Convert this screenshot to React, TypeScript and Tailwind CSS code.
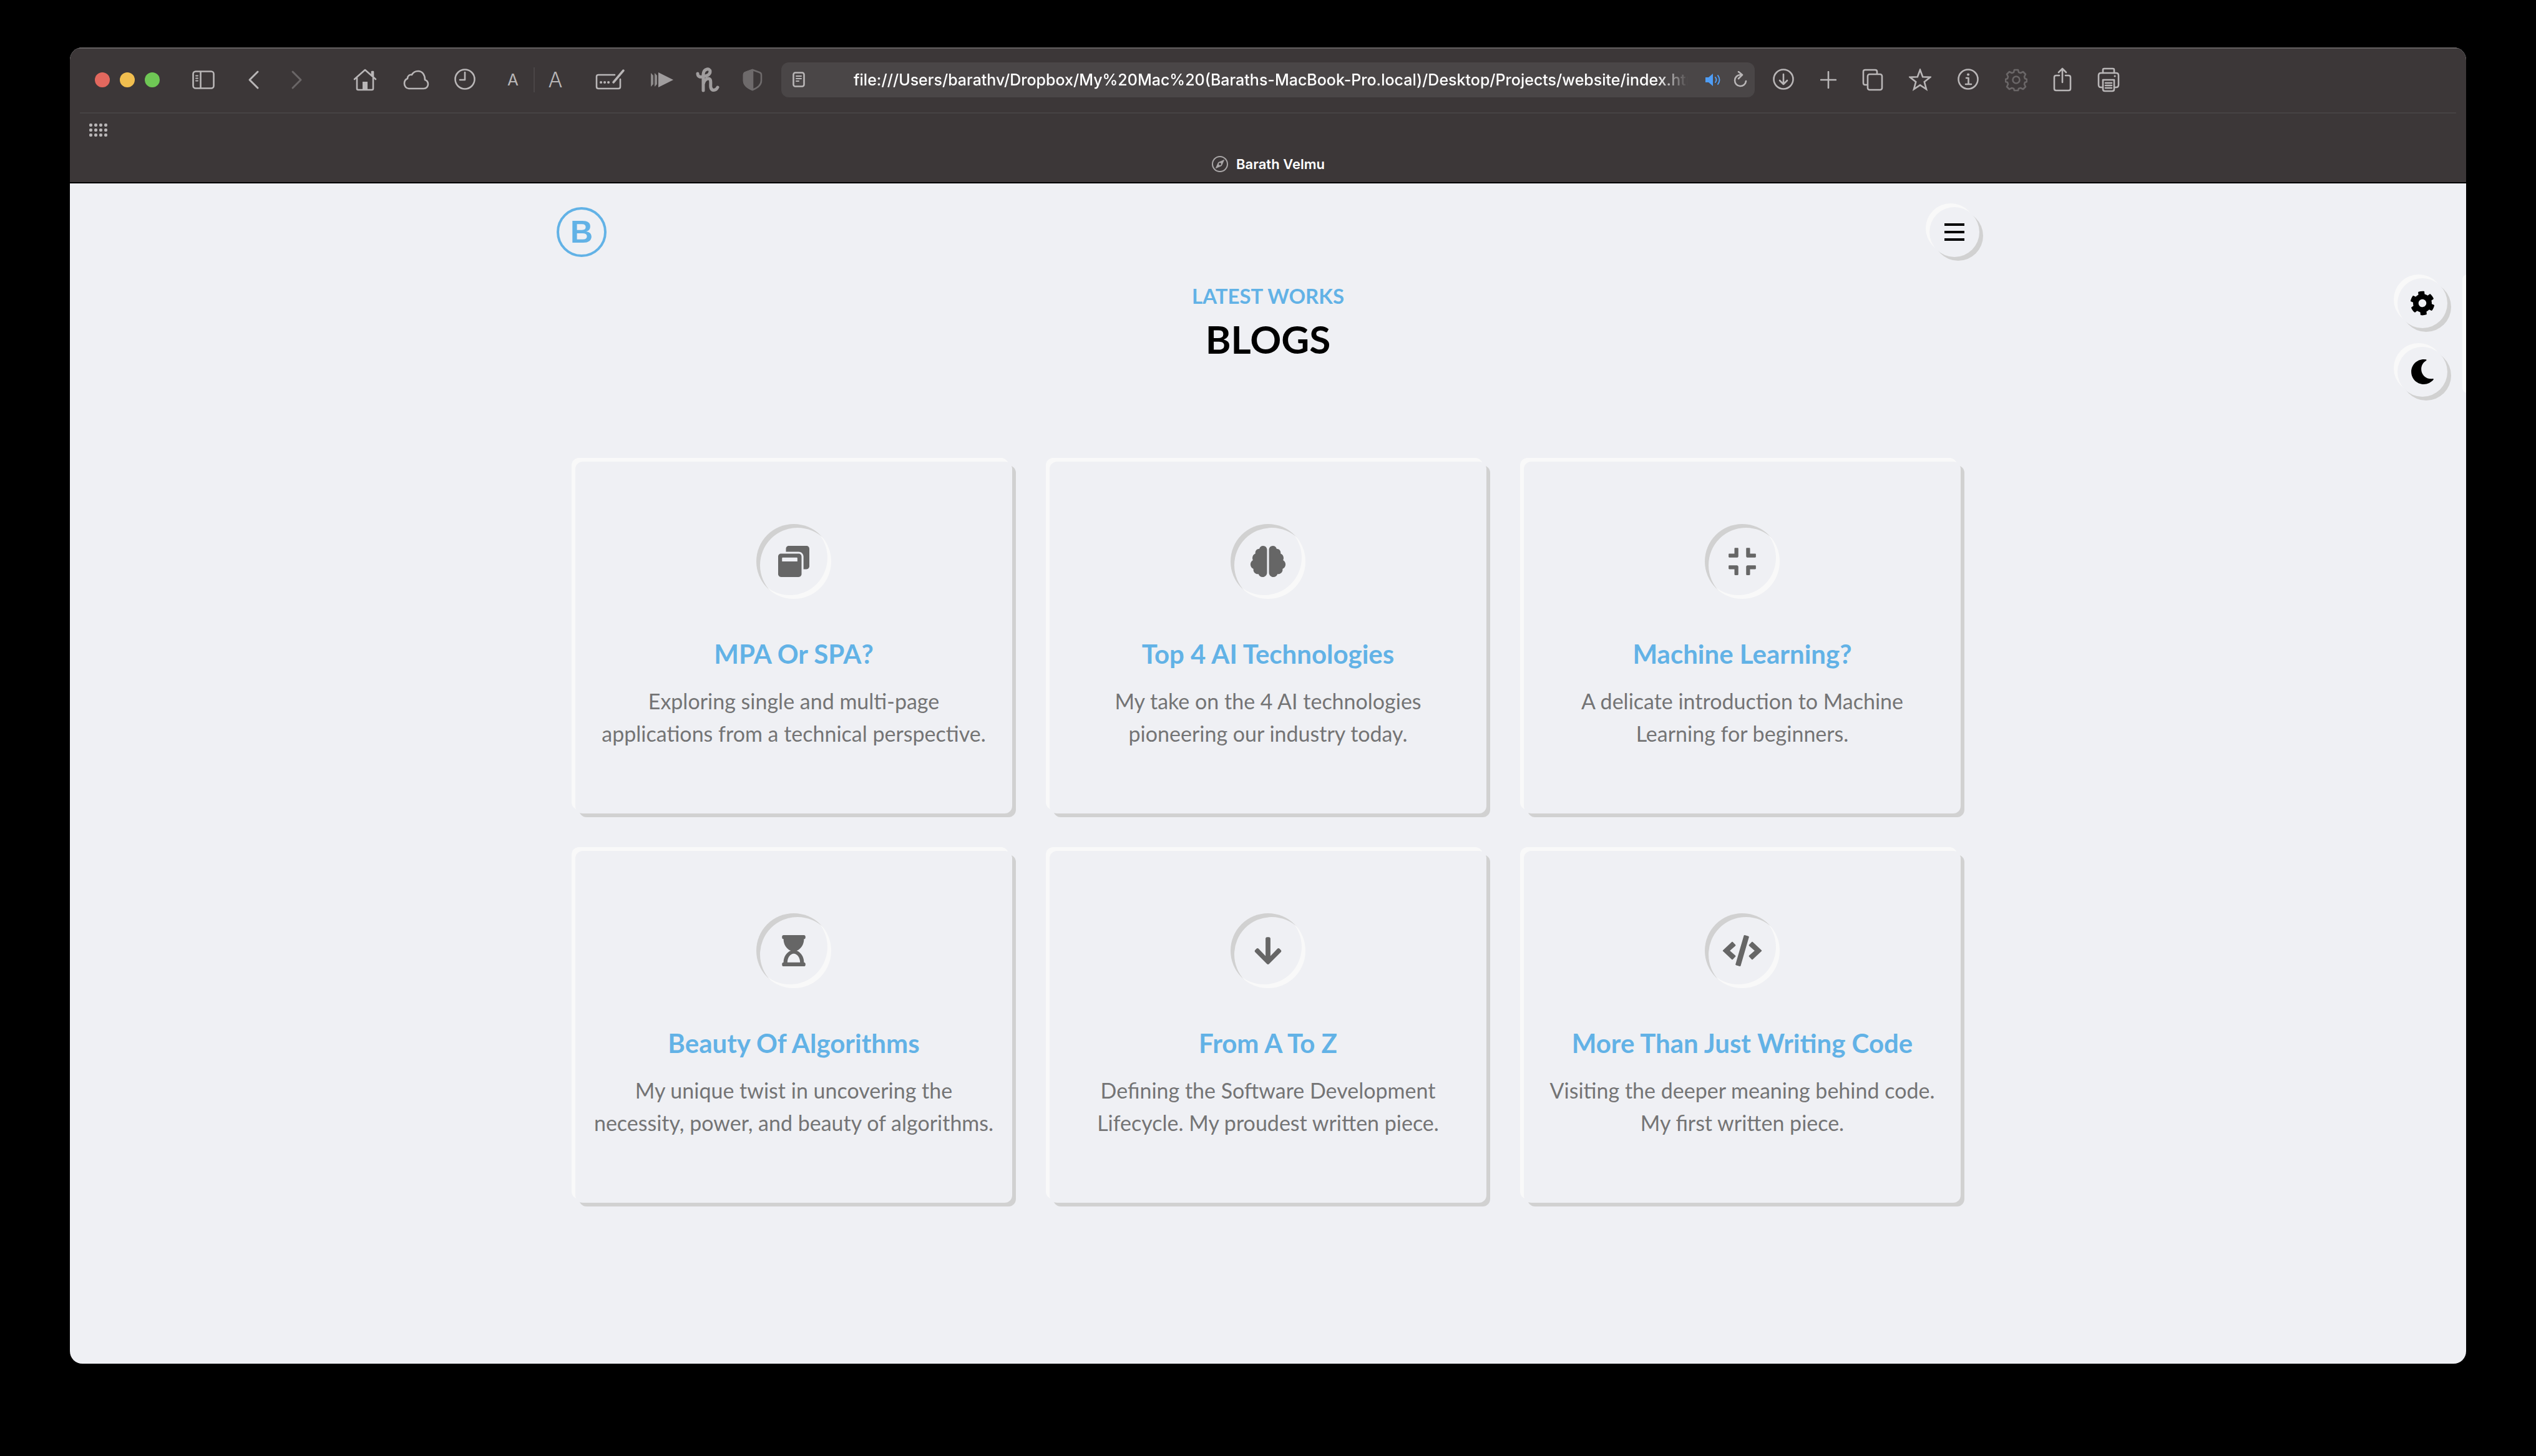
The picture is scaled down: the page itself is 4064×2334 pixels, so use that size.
import type { ReactNode } from "react";
import {
  FaArrowDown,
  FaBrain,
  FaCode,
  FaCog,
  FaCompress,
  FaHourglassStart,
  FaMoon,
  FaWindowRestore,
} from "react-icons/fa";

type GlyphProps = { w: number; h: number; label: string; className?: string; tone?: string; children: ReactNode };

function ToolButton({ w, h, label, className = "", tone = "text-[#b9b6b7]", children }: GlyphProps) {
  return (
    <button type="button" aria-label={label} className={`flex shrink-0 items-center justify-center ${tone} ${className}`}>
      <svg
        width={w}
        height={h}
        viewBox={`0 0 ${w} ${h}`}
        fill="none"
        stroke="currentColor"
        strokeWidth="2.6"
        strokeLinecap="round"
        strokeLinejoin="round"
      >
        {children}
      </svg>
    </button>
  );
}

function LeftTools() {
  return (
    <div className="flex shrink-0 items-center">
      <div className="flex gap-4">
        <button type="button" aria-label="Close" className="size-6 rounded-full bg-[#e2685e]" />
        <button type="button" aria-label="Minimize" className="size-6 rounded-full bg-[#f1be4f]" />
        <button type="button" aria-label="Zoom" className="size-6 rounded-full bg-[#6fc755]" />
      </div>
      <ToolButton w={36} h={32} label="Sidebar" className="ml-[52px]">
        <rect x="1.5" y="2.5" width="33" height="27" rx="4" />
        <path d="M13.5 3v26" />
        <path d="M6 9.500h3M6 13.500h3M6 17.500h3" strokeWidth="2" />
      </ToolButton>
      <ToolButton w={36} h={32} label="Back" className="ml-11">
        <path d="M25 3L12 16l13 13" strokeWidth="3" />
      </ToolButton>
      <ToolButton w={36} h={32} label="Forward" className="ml-[34px]" tone="text-[#6a6667]">
        <path d="M11 3l13 13-13 13" strokeWidth="3" />
      </ToolButton>
      <ToolButton w={38} h={38} label="Home" className="ml-[72px]">
        <path d="M2 18L19 3l17 15M6 16v17q0 2 2 2h22q2 0 2-2V16M30 12V6h2v8" />
        <path d="M15 35V22h8v13z" fill="currentColor" stroke="none" />
      </ToolButton>
      <ToolButton w={42} h={32} label="iCloud tabs" className="ml-[42px]">
        <path d="M9 30h24c4 0 7-3 7-7 0-3-2-6-5-7C35 8 31 2 24 2c-5 0-8 2-10 6-4-1-7 2-7 6-3 1-5 4-5 8s3 8 7 8z" />
      </ToolButton>
      <ToolButton w={34} h={36} label="History" className="ml-10">
        <circle cx="17" cy="17" r="15.500" />
        <path d="M17 6v12H9" />
      </ToolButton>
      <button type="button" aria-label="Smaller text" className="ml-10 w-10 font-[Inter,sans-serif] text-[26px] leading-10 text-[#b9b6b7]">
        A
      </button>
      <span className="mx-[13px] h-10 w-0.5 bg-[#4a4647]" />
      <button type="button" aria-label="Larger text" className="w-10 font-[Inter,sans-serif] text-[34px] leading-10 font-light text-[#b9b6b7]">
        A
      </button>
      <ToolButton w={48} h={36} label="Autofill" className="ml-11">
        <path d="M31 10H5q-3 0-3 3v16q0 3 3 3h32q3 0 3-3V17" />
        <path d="M45 3L29 22" strokeWidth="3.500" />
        <path d="M9 22h.1M15 22h.1M21 22h.1" strokeWidth="4" />
      </ToolButton>
      <ToolButton w={38} h={26} label="Skip" className="ml-10" tone="text-[#a09d9e]">
        <g fill="currentColor" stroke="none">
          <path d="M13 1l24 12-24 12z" />
          <path d="M7 2l4 4v14l-4 4zM1 2l4 4v14l-4 4z" opacity="0.800" />
        </g>
      </ToolButton>
      <ToolButton w={38} h={40} label="Coupons" className="ml-[35px]" tone="text-[#a09d9e]">
        <path
          d="M3 10c0 5 4 6 8 5 7-1 12-4 12-8.500C23 1 13 1 12 11v26M12 27c1-6 5-9 8-9 6 0 3 9 4 14 1 6 8 6 11 0"
          strokeWidth="5"
        />
      </ToolButton>
      <ToolButton w={32} h={36} label="Privacy report" className="ml-[37px]" tone="text-[#6e6a6b]">
        <path d="M16 2l11 4q3 1 3 4v9c0 8-6 12-14 15C8 31 2 27 2 19v-9q0-3 3-4z" />
        <path d="M16 2v32C8 31 2 27 2 19v-9q0-3 3-4z" fill="currentColor" />
      </ToolButton>
    </div>
  );
}

function AddressBar() {
  return (
    <div className="ml-[30px] flex h-14 min-w-0 flex-1 items-center rounded-xl bg-[#4a4647] pr-3 pl-[18px]">
      <ToolButton w={20} h={26} label="Reader">
        <rect x="1.500" y="1.500" width="17" height="22" rx="3" />
        <path d="M6 7h8M6 11h8M6 15h4" strokeWidth="2" />
      </ToolButton>
      <input
        aria-label="Address"
        readOnly
        defaultValue="file:///Users/barathv/Dropbox/My%20Mac%20(Baraths-MacBook-Pro.local)/Desktop/Projects/website/index.html"
        className="ml-[78px] min-w-0 flex-1 bg-transparent font-[Inter,sans-serif] text-[25px] leading-10 font-medium text-white outline-none [mask-image:linear-gradient(to_right,black_calc(100%-50px),transparent)]"
      />
      <ToolButton w={26} h={22} label="Mute tab" className="ml-[27px]" tone="text-[#4f9df5]">
        <path d="M1 7h5l7-6v20l-7-6H1z" fill="currentColor" stroke="none" />
        <path d="M17 7q3 4 0 8M21 4q5 7 0 14" strokeWidth="2" />
      </ToolButton>
      <ToolButton w={24} h={28} label="Reload" className="ml-[18px]">
        <path d="M13 6a9 9 0 1 0 9 10" />
        <path d="M10 1l6 5-6 6" />
      </ToolButton>
    </div>
  );
}

function RightTools() {
  return (
    <div className="ml-7 flex shrink-0 items-center gap-[41px]">
      <ToolButton w={36} h={36} label="Downloads">
        <circle cx="18" cy="17" r="15.500" />
        <path d="M18 9v16M12 19l6 6 6-6" />
      </ToolButton>
      <ToolButton w={26} h={28} label="New tab">
        <path d="M13 1v26M1 14h24" />
      </ToolButton>
      <ToolButton w={34} h={36} label="Tab overview">
        <path d="M8 26H5q-3 0-3-3V5q0-3 3-3h16q3 0 3 3v3" />
        <rect x="9" y="9" width="23" height="25" rx="3" />
      </ToolButton>
      <ToolButton w={36} h={36} label="Bookmark">
        <path d="M18 2l4.200 11.300 12 .5-9.400 7.500 3.200 11.700L18 26.300 8 33l3.200-11.700L1.800 13.800l12-.5z" strokeLinejoin="miter" />
      </ToolButton>
      <ToolButton w={36} h={36} label="Page info">
        <circle cx="18" cy="17" r="15.500" />
        <path d="M15 15h3.500v10M14 25h9" />
        <path d="M18 9.500h.1" strokeWidth="4" />
      </ToolButton>
      <ToolButton w={36} h={38} label="Settings" tone="text-[#6a6667]">
        <path d="M15 3h6l1 4 3 1 4-2 4 4-2 4 1 3 3 1v4l-3 1-1 3 2 4-4 4-4-2-3 1-1 3h-6l-1-3-3-1-4 2-4-4 2-4-1-3-3-1v-4l3-1 1-3-2-4 4-4 4 2 3-1z" />
        <circle cx="18" cy="19" r="5.500" />
      </ToolButton>
      <ToolButton w={30} h={42} label="Share">
        <path d="M10 14H5q-3 0-3 3v18q0 3 3 3h20q3 0 3-3V17q0-3-3-3h-5M15 25V3M9 9l6-6 6 6" />
      </ToolButton>
      <ToolButton w={36} h={42} label="Print">
        <path d="M9 10V5q0-2 2-2h14q2 0 2 2v5" />
        <path d="M9 33H6q-4 0-4-4V14q0-4 4-4h24q4 0 4 4v15q0 4-4 4h-3" />
        <path d="M9 21h18v15q0 3-3 3H12q-3 0-3-3zM13 26h10M13 30h10M13 34h10" />
        <path d="M28 15h.1" strokeWidth="3" />
      </ToolButton>
    </div>
  );
}

function BrowserChrome() {
  return (
    <header className="flex flex-col border-b-2 border-black bg-[#3c3738] shadow-[inset_0_2px_0_#646061]">
      <div className="flex h-[104px] items-center pr-[555px] pl-10">
        <LeftTools />
        <AddressBar />
        <RightTools />
      </div>
      <div className="mx-4 h-0.5 bg-[#474344]" />
      <div className="flex h-[52px] items-center pl-[31px]">
        <button type="button" aria-label="Favorites" className="grid grid-cols-4 gap-[3px]">
          {Array.from({ length: 12 }, (_, i) => (
            <span key={i} className="size-[5px] rounded-xs bg-[#b9b6b7]" />
          ))}
        </button>
      </div>
      <div className="flex h-[58px] items-center justify-center gap-3">
        <svg width="28" height="28" viewBox="0 0 28 28" fill="none" stroke="#aaa7a8" strokeWidth="2">
          <circle cx="14" cy="14" r="12" />
          <path d="M20.500 7.500l-4 9-9 4 4-9z" fill="#aaa7a8" strokeWidth="1" />
          <circle cx="14" cy="14" r="2" fill="#3c3738" stroke="none" />
        </svg>
        <span className="font-[Inter,sans-serif] text-[22px] leading-7 font-semibold text-white">Barath Velmu</span>
      </div>
    </header>
  );
}

const posts = [
  {
    icon: FaWindowRestore,
    title: "MPA Or SPA?",
    lines: ["Exploring single and multi-page", "applications from a technical perspective."],
  },
  {
    icon: FaBrain,
    title: "Top 4 AI Technologies",
    lines: ["My take on the 4 AI technologies", "pioneering our industry today."],
  },
  {
    icon: FaCompress,
    title: "Machine Learning?",
    lines: ["A delicate introduction to Machine", "Learning for beginners."],
  },
  {
    icon: FaHourglassStart,
    title: "Beauty Of Algorithms",
    lines: ["My unique twist in uncovering the", "necessity, power, and beauty of algorithms."],
  },
  {
    icon: FaArrowDown,
    title: "From A To Z",
    lines: ["Defining the Software Development", "Lifecycle. My proudest written piece."],
  },
  {
    icon: FaCode,
    title: "More Than Just Writing Code",
    lines: ["Visiting the deeper meaning behind code.", "My first written piece."],
  },
];

function RoundButton({ label, children }: { label: string; children: ReactNode }) {
  return (
    <button
      type="button"
      aria-label={label}
      className="flex size-20 items-center justify-center rounded-full bg-[#eff0f4] text-[40px] text-black shadow-[6px_6px_0_#d1d1d1,-6px_-6px_0_#f9f9f9]"
    >
      {children}
    </button>
  );
}

export default function App() {
  return (
    <div className="flex min-h-screen flex-col bg-black px-28 pt-19 pb-[148px]">
      <div className="flex flex-1 flex-col overflow-hidden rounded-[20px] bg-[#eff0f4]">
        <BrowserChrome />
        <div className="relative flex-1 overflow-hidden font-[Lato,sans-serif]">
          <div className="mx-auto max-w-[2280px]">
            <nav className="flex items-center justify-between pt-[38px]">
              <a
                href="#home"
                className="flex size-20 items-center justify-center rounded-full border-4 border-[#62b2e6] font-['Liberation_Sans',sans-serif] text-[50px] leading-none font-bold text-[#62b2e6]"
              >
                B
              </a>
              <RoundButton label="Menu">
                <span className="flex flex-col gap-2">
                  <span className="h-1 w-8 bg-black" />
                  <span className="h-1 w-8 bg-black" />
                  <span className="h-1 w-8 bg-black" />
                </span>
              </RoundButton>
            </nav>
            <main className="px-[30px] pt-9 pb-20">
              <p className="text-center text-[33px] leading-[52px] font-bold text-[#62b2e6]">LATEST WORKS</p>
              <h1 className="mt-2 text-center text-[62px] leading-[70px] font-bold text-black">BLOGS</h1>
              <div className="mt-[162px] grid grid-cols-3 gap-[60px]">
                {posts.map(({ icon: Icon, title, lines }) => (
                  <article
                    key={title}
                    className="flex flex-col items-center rounded-xl bg-[#eff0f4] pt-[100px] pb-[102px] text-center shadow-[6px_6px_0_#d1d1d1,-6px_-6px_0_#f9f9f9]"
                  >
                    <div className="flex size-[120px] items-center justify-center rounded-full text-[#666] shadow-[inset_6px_6px_0_#d1d1d1,inset_-6px_-6px_0_#f9f9f9]">
                      <Icon className="h-[50px] w-16" />
                    </div>
                    <h2 className="mt-[58px] text-[42px] leading-[60px] font-bold text-[#62b2e6]">{title}</h2>
                    <p className="mt-5 text-[34px] leading-[52px] whitespace-nowrap text-[#747475]">
                      {lines[0]}
                      <br />
                      {lines[1]}
                    </p>
                  </article>
                ))}
              </div>
            </main>
          </div>
          <div className="absolute top-[152px] right-0 flex items-start gap-[30px]">
            <div className="flex flex-col gap-[30px]">
              <RoundButton label="Theme settings">
                <FaCog className="-rotate-6" />
              </RoundButton>
              <RoundButton label="Dark mode">
                <FaMoon />
              </RoundButton>
            </div>
            <div className="-mr-10 h-[190px] w-10 rounded-l-lg shadow-[-6px_-6px_0_#f9f9f9]" />
          </div>
        </div>
      </div>
    </div>
  );
}
